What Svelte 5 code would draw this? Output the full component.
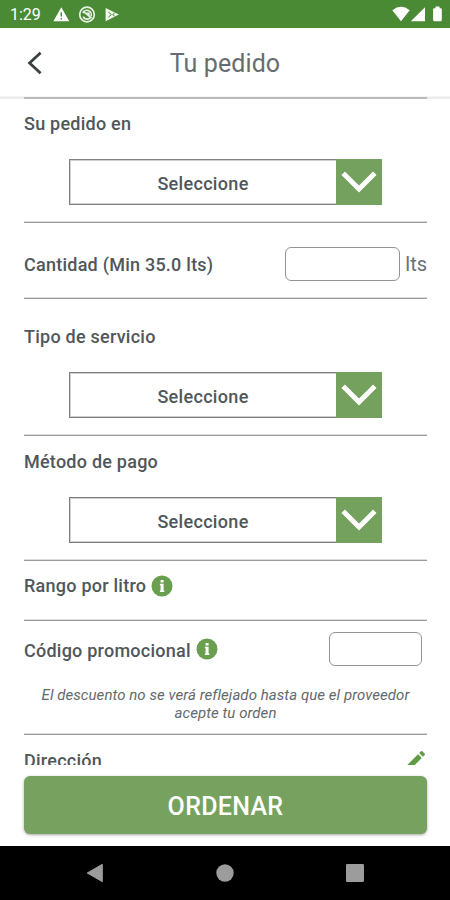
<script>
  let cantidad = "";
  let codigo = "";
  let pedido = "Seleccione";
  let servicio = "Seleccione";
  let pago = "Seleccione";
</script>

{#snippet selector(valor)}
  <button class="selector">
    <span class="valor">{valor}</span>
    <span class="flecha">
      <svg width="46" height="46" viewBox="0 0 46 46">
        <path d="M7.2 14.3 L23 30.1 L38.8 14.3" fill="none" stroke="#fff" stroke-width="4.9" />
      </svg>
    </span>
  </button>
{/snippet}

{#snippet info()}
  <svg class="info" width="22" height="22" viewBox="0 0 22 22">
    <circle cx="11" cy="11" r="10.5" fill="#6a9f4f" />
    <path d="M9.6 4.9h3v2.6h-3z M8.9 8.8h3.7v6.6h.7v1.5H8.9v-1.5h.7v-5.1h-.7z" fill="#fff" />
  </svg>
{/snippet}

<div class="pantalla">
  <div class="estado">
    <span class="hora">1:29</span>
    <svg class="avisos" width="68" height="18" viewBox="0 0 68 18">
      <path d="M8.3 1.2 L16.2 15.3 H0.4z" fill="#fff" />
      <path d="M8.3 6.2v4.4M8.3 12v1.6" stroke="#4a8a35" stroke-width="1.4" />
      <circle cx="34" cy="8.5" r="7.3" fill="none" stroke="#e8f2e4" stroke-width="1.7" />
      <path d="M30 7.1a4.3 4.3 0 0 1 8 3.2M38 10.6a4.3 4.3 0 0 1-7.8 0M30 5.2l8.5 7M33 7.2h3v2.5" fill="none" stroke="#e8f2e4" stroke-width="1.6" />
      <path d="M52.6 2 L66 8.6 L52.6 15.2z" fill="#f0f7ed" />
      <path d="M55.4 6l3 2.6-3 2.6M61.8 7L59.6 8.6l2.2 1.6" fill="none" stroke="#4a8a35" stroke-width="1" />
    </svg>
    <svg class="senal" width="52" height="18" viewBox="0 0 52 18">
      <path d="M0.3 5.2 Q9 -1.6 17.7 5.2 L9 16.2z" fill="#fff" />
      <path d="M33 2.3V16.2H18.8z" fill="#fff" />
      <path d="M43.5 1.6h4v1.7h1.2q1.1 0 1.1 1.1v10.7q0 1.1-1.1 1.1h-6.5q-1.1 0-1.1-1.1V4.4q0-1.1 1.1-1.1h1.3z" fill="#fff" />
    </svg>
  </div>

  <header>
    <svg class="volver" width="16" height="24" viewBox="0 0 16 24">
      <path d="M13.6 1.8 L2.6 12 L13.6 22.2" fill="none" stroke="#3a3f41" stroke-width="2.8" />
    </svg>
    <h1>Tu pedido</h1>
  </header>

  <main>
    <section class="campo">
      <h2>Su pedido en</h2>
      {@render selector(pedido)}
    </section>

    <section class="fila cantidad">
      <h2>Cantidad (Min 35.0 lts)</h2>
      <input bind:value={cantidad} />
      <span class="unidad">lts</span>
    </section>

    <section class="campo servicio">
      <h2>Tipo de servicio</h2>
      {@render selector(servicio)}
    </section>

    <section class="campo">
      <h2>Método de pago</h2>
      {@render selector(pago)}
    </section>

    <section class="rango">
      <div class="fila">
        <h2>Rango por litro</h2>
        {@render info()}
      </div>
    </section>

    <section class="promo">
      <div class="fila">
        <h2>Código promocional</h2>
        {@render info()}
        <input bind:value={codigo} />
      </div>
      <p>El descuento no se verá reflejado hasta que el proveedor<br />acepte tu orden</p>
    </section>

    <section class="direccion">
      <div class="fila">
        <h2>Dirección</h2>
        <svg class="lapiz" width="18" height="18" viewBox="3 3 18 18">
          <path d="M3 17.25V21h3.75L17.81 9.94l-3.75-3.75L3 17.25zM20.71 7.04a1 1 0 0 0 0-1.41l-2.34-2.34a1 1 0 0 0-1.41 0l-1.83 1.83 3.75 3.75 1.83-1.83z" fill="#5f9c45" />
        </svg>
      </div>
    </section>
  </main>

  <footer>
    <button class="ordenar">ORDENAR</button>
  </footer>

  <nav>
    <svg width="18" height="20" viewBox="0 0 18 20">
      <path d="M16.3 1.3V18.7L1.2 10z" fill="#9c9c9c" stroke="#9c9c9c" stroke-linejoin="round" />
    </svg>
    <svg width="18" height="18" viewBox="0 0 18 18">
      <circle cx="9" cy="9" r="8.7" fill="#9c9c9c" />
    </svg>
    <svg width="18" height="18" viewBox="0 0 18 18">
      <rect width="18" height="18" rx="1.2" fill="#9c9c9c" />
    </svg>
  </nav>
</div>

<style>
  :global(body) {
    background: #fff;
  }

  .pantalla {
    display: flex;
    flex-direction: column;
    width: 450px;
    height: 900px;
    overflow: hidden;
    font-family: Roboto, "Liberation Sans", sans-serif;
    color: #50575a;
  }

  .estado {
    display: flex;
    align-items: center;
    height: 28px;
    flex: none;
    padding: 0 7px 0 10px;
    background: #4a8a35;
    color: #fff;
  }

  .hora {
    width: 43px;
    font-size: 16px;
    line-height: 28px;
    padding-top: 2px;
  }

  .avisos {
    margin-top: 2px;
  }

  .senal {
    margin: 0 -1px 0 auto;
  }

  header {
    display: grid;
    grid-template-columns: 60px 1fr 60px;
    align-items: center;
    height: 69px;
    flex: none;
    box-sizing: border-box;
    border-bottom: 1px solid #f4f4f4;
  }

  .volver {
    margin: 1px 0 0 27px;
  }

  h1 {
    margin: 2px 0 0;
    font-size: 25px;
    font-weight: 400;
    letter-spacing: 0.1px;
    text-align: center;
    color: #666d71;
  }

  main {
    height: 668px;
    flex: none;
    overflow: hidden;
    padding: 0 23px 0 24px;
    box-sizing: border-box;
    background: linear-gradient(#ececec 0, #ececec 2px, #fff 2px);
  }

  section {
    box-sizing: border-box;
    border-top: 1px solid #9a9a9a;
    box-shadow: 0 -1px 0 #dcdcdc;
  }

  section:first-child {
    border-top: 2px solid #b9b9b9;
    box-shadow: none;
  }

  h2 {
    margin: 0;
    font-size: 18px;
    line-height: 22px;
    font-weight: 500;
    letter-spacing: 0.24px;
    white-space: nowrap;
  }

  .campo {
    height: 125px;
    padding-top: 15px;
  }

  .campo:first-child {
    padding-top: 14px;
  }

  .servicio {
    height: 137px;
    padding-top: 27px;
  }

  .selector {
    display: flex;
    width: 313px;
    height: 46px;
    margin: 24px 0 0 45px;
    padding: 0;
    border: 0;
    background: #fff;
    font: inherit;
    color: inherit;
  }

  .valor {
    flex: 1;
    box-sizing: border-box;
    height: 46px;
    border: 1px solid #808080;
    border-right: 0;
    box-shadow: inset 1px 1px 0 #d0d0d0, inset 0 -1px 0 #d0d0d0;
    font-size: 18px;
    line-height: 47px;
    font-weight: 500;
    letter-spacing: 0.32px;
    text-align: center;
  }

  .flecha {
    width: 46px;
    height: 46px;
    background: #74a15e;
  }

  .flecha svg {
    display: block;
  }

  .fila {
    display: flex;
    align-items: center;
  }

  .cantidad {
    height: 76px;
    padding-top: 7px;
  }

  input {
    box-sizing: border-box;
    height: 34px;
    margin: 0 0 0 auto;
    padding: 0 8px;
    border: 1px solid #949494;
    border-radius: 6px;
    background: #fff;
  }

  .cantidad input {
    width: 115px;
  }

  .cantidad h2 {
    padding-top: 1px;
  }

  .unidad {
    margin-left: 5px;
    font-size: 20px;
    color: #6b7174;
  }

  .rango {
    height: 60px;
    padding-top: 14px;
  }

  .info {
    margin: -1px 0 0 5px;
  }

  .promo {
    height: 114px;
    padding-top: 11px;
  }

  .promo h2 {
    padding-top: 3px;
  }

  .promo input {
    width: 93px;
    margin-right: 5px;
  }

  p {
    margin: 20px 0 0;
    font-size: 15px;
    line-height: 18px;
    letter-spacing: 0.06px;
    font-style: italic;
    text-align: center;
    white-space: nowrap;
    color: #63696c;
  }

  .direccion {
    padding-top: 15px;
  }

  .direccion .fila {
    justify-content: space-between;
  }

  .lapiz {
    margin: -2px 2px 0 0;
  }

  footer {
    height: 81px;
    flex: none;
    box-sizing: border-box;
    padding: 11px 23px 0 24px;
  }

  .ordenar {
    display: block;
    width: 100%;
    height: 58px;
    padding: 3px 0 0;
    border: 0;
    border-radius: 6px;
    background: #76a15e;
    box-shadow: 0 1px 3px rgba(0, 0, 0, 0.35);
    font-family: inherit;
    font-size: 25px;
    font-weight: 500;
    letter-spacing: 0.3px;
    color: #fff;
  }

  nav {
    display: flex;
    align-items: center;
    justify-content: space-between;
    flex: 1;
    padding: 0 86px;
    background: #000;
  }
</style>
